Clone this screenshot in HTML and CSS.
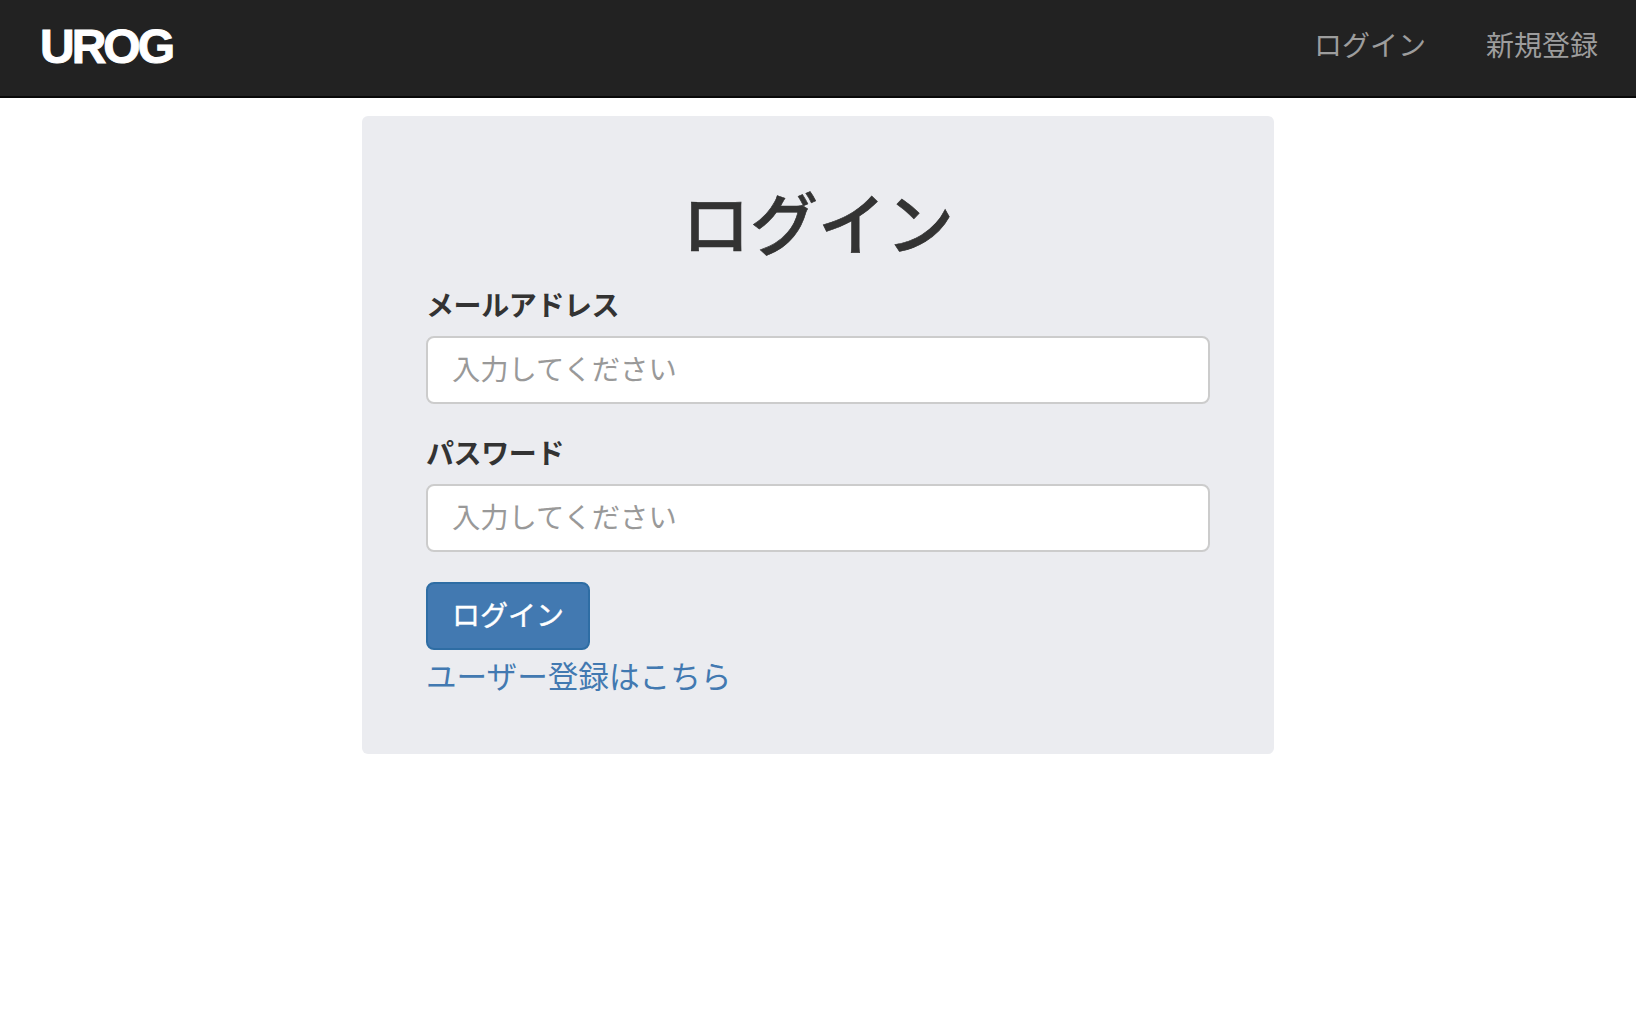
FILE: index.html
```html
<!DOCTYPE html>
<html lang="ja">
<head>
    <meta charset="UTF-8">
    <meta name="viewport" content="width=device-width, initial-scale=1.0">
    <title>UROG</title>
    <link rel="stylesheet" href="styles.css">
</head>
<body>
    <header class="navbar">
        <a class="brand" href="#">UROG</a>
        <nav class="nav-links">
            <a href="#">ログイン</a>
            <a href="#">新規登録</a>
        </nav>
    </header>

    <main class="login-card">
        <h1>ログイン</h1>
        <form>
            <div class="form-group">
                <label for="email">メールアドレス</label>
                <input id="email" type="text" placeholder="入力してください">
            </div>
            <div class="form-group">
                <label for="password">パスワード</label>
                <input id="password" type="password" placeholder="入力してください">
            </div>
            <button type="button" class="btn">ログイン</button>
        </form>
        <a class="signup-link" href="#">ユーザー登録はこちら</a>
    </main>
</body>
</html>
```

FILE: styles.css
```css
* {
    box-sizing: border-box;
}

body {
    margin: 0;
    background-color: #fff;
    color: #333;
    font-family: "Noto Sans CJK JP", "Liberation Sans", sans-serif;
    font-size: 28px;
    line-height: 40px;
}

a {
    text-decoration: none;
}

.navbar {
    display: flex;
    justify-content: space-between;
    align-items: center;
    height: 98px;
    padding: 0 8px 8px 40px;
    background-color: #222;
    border-bottom: 2px solid #080808;
}

.brand {
    margin-top: 6px;
    color: #fff;
    font-family: "Liberation Sans", sans-serif;
    font-size: 48px;
    font-weight: 700;
    letter-spacing: -3px;
    -webkit-text-stroke: 1px #fff;
}

.nav-links {
    display: flex;
}

.nav-links a {
    padding: 0 30px;
    color: #9d9d9d;
}

.login-card {
    width: 912px;
    margin: 18px auto 0;
    padding: 65px 64px 59px;
    background-color: #ebecf0;
    border-radius: 6px;
}

h1 {
    margin: 0 0 24px;
    font-size: 68px;
    font-weight: 500;
    line-height: 79px;
    text-align: center;
    -webkit-text-stroke: 0.6px #333;
}

.form-group {
    margin-bottom: 28px;
}

label {
    display: block;
    margin-bottom: 12px;
    font-weight: 700;
    letter-spacing: -0.4px;
}

input {
    display: block;
    width: 100%;
    height: 68px;
    padding: 0 24px 5px;
    border: 2px solid #ccc;
    border-radius: 8px;
    background-color: #fff;
    color: #555;
    font: inherit;
    font-size: 28.3px;
}

input::placeholder {
    color: #999;
}

.btn {
    display: block;
    height: 68px;
    margin-top: 30px;
    padding: 0 24px 4px;
    border: 2px solid #2e6da4;
    border-radius: 8px;
    background-color: #4279b1;
    color: #fff;
    font: inherit;
    -webkit-text-stroke: 0.4px #fff;
}

.signup-link {
    display: block;
    margin-top: 5px;
    color: #4279b1;
    font-size: 30.6px;
}
```
